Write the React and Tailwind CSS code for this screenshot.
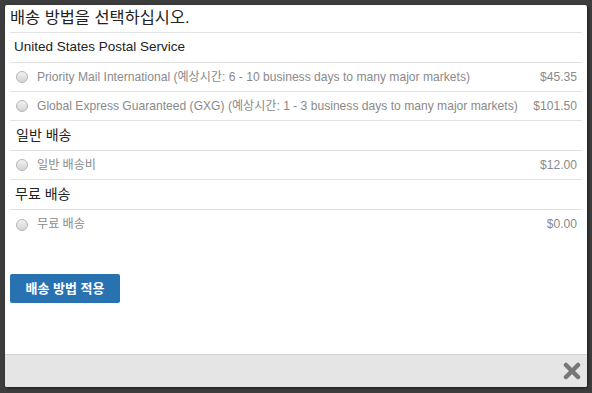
export default function App() {
  const font = { fontFamily: '"Liberation Sans", Arial, "Noto Sans CJK KR", sans-serif' };
  const Radio = () => (
    <span className="inline-block w-[12px] h-[12px] rounded-full border border-[#b5b5b5] bg-gradient-to-b from-[#f2f2f2] to-[#d4d4d4] shrink-0" />
  );
  const Option = ({ label, price, last }) => (
    <div className={"h-[29px] flex items-center pl-[6px] pr-[5px] text-[12.1px] text-[#8a8a8a] " + (last ? "" : "border-b border-[#e3e3e3]")}>
      <Radio />
      <span className="ml-[9px] flex-1 truncate">{label}</span>
      <span className="ml-2">{price}</span>
    </div>
  );
  const Heading = ({ children, cls = "" }) => (
    <div className={"h-[30px] border-b border-[#e3e3e3] flex items-center text-[#222] " + cls}>{children}</div>
  );
  return (
    <div className="w-[592px] h-[393px] bg-[#3d3d3d] pt-[5px] pl-[5px]" style={font}>
      <div className="w-[582px] h-[382px] bg-white rounded-[2px] shadow-[1px_1px_3px_rgba(0,0,0,0.6)] flex flex-col overflow-hidden">
        <div className="flex-1 px-[5px]">
          <div className="h-[28px] border-b border-[#e3e3e3] flex items-end pb-[2px] text-[16.4px] text-[#222]">배송 방법을 선택하십시오.</div>
          <Heading cls="pl-[4px] text-[13.5px]">United States Postal Service</Heading>
          <Option label="Priority Mail International (예상시간: 6 - 10 business days to many major markets)" price="$45.35" />
          <Option label="Global Express Guaranteed (GXG) (예상시간: 1 - 3 business days to many major markets)" price="$101.50" />
          <Heading cls="pl-[6px] text-[14px]">일반 배송</Heading>
          <Option label="일반 배송비" price="$12.00" />
          <Heading cls="pl-[5px] text-[14px]">무료 배송</Heading>
          <Option label="무료 배송" price="$0.00" last />
          <button className="mt-[35px] w-[110px] h-[29px] rounded-[2px] bg-[#2872b2] text-white text-[13px] font-bold flex items-center justify-center">배송 방법 적용</button>
        </div>
        <div className="h-[33px] bg-[#e5e5e5] border-t border-[#d2d2d2] flex items-center justify-end pr-[6px]">
          <svg width="18" height="18" viewBox="0 0 18 18">
            <path d="M3 3 L15 15 M15 3 L3 15" stroke="#777" strokeWidth="4.5" strokeLinecap="round" />
          </svg>
        </div>
      </div>
    </div>
  );
}
